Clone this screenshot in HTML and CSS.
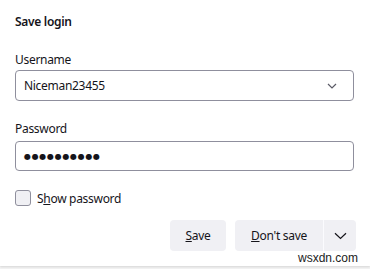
FILE: index.html
```html
<!DOCTYPE html>
<html lang="en">

<head>
    <meta charset="UTF-8">
    <meta name="viewport" content="width=device-width, initial-scale=1.0">
    <title>Save login</title>
    <link rel="stylesheet" href="styles.css">
</head>

<body>
    <div class="panel">
        <h1 class="title">Save login</h1>

        <label class="label label-user">Username</label>
        <div class="field">
            <span class="value">Niceman23455</span>
            <svg class="chevron" width="10" height="6" viewBox="0 0 10 6">
                <path d="M1 1 L5 5 L9 1" fill="none" stroke="#5b5b66" stroke-width="1.2" />
            </svg>
        </div>

        <label class="label label-pass">Password</label>
        <div class="field field-pass">
            <span class="dots">●●●●●●●●●●</span>
        </div>

        <div class="check-row">
            <span class="checkbox"></span>
            <span class="check-text">S<u>h</u>ow password</span>
        </div>

        <div class="buttons">
            <button class="btn btn-save"><u>S</u>ave</button>
            <div class="split">
                <button class="btn btn-dont"><u>D</u>on't save</button>
                <button class="btn btn-more">
                    <svg width="13" height="8" viewBox="0 0 13 8">
                        <path d="M1 1.2 L6.5 6.5 L12 1.2" fill="none" stroke="#15141a" stroke-width="1.2" />
                    </svg>
                </button>
            </div>
        </div>

        <span class="watermark">wsxdn.com</span>
    </div>
</body>

</html>
```

FILE: styles.css
```css
* {
    margin: 0;
    padding: 0;
    box-sizing: border-box;
}

body {
    width: 370px;
    height: 269px;
    background-color: #f3f3f3;
    font-family: "Noto Sans", "Open Sans", sans-serif;
    font-size: 12px;
    letter-spacing: -0.3px;
    color: #15141a;
    overflow: hidden;
}

/* Doorhanger panel */
.panel {
    position: relative;
    height: 266px;
    background-color: #fff;
    padding: 13px 15px 0 15px;
    display: flex;
    flex-direction: column;
    box-shadow: 0 1px 2px rgba(0, 0, 0, 0.12);
}

.title {
    font-size: 12px;
    font-weight: 600;
    line-height: 18px;
    margin-bottom: 20px;
}

.label {
    line-height: 18px;
}

.label-user {
    margin-bottom: 1px;
}

.label-pass {
    margin-bottom: 3px;
}

.field {
    height: 31px;
    width: 339px;
    border: 1px solid #8f8f9d;
    border-radius: 4px;
    display: flex;
    align-items: center;
    justify-content: space-between;
    padding: 0 12px 0 8px;
    margin-bottom: 19px;
}

.field-pass {
    height: 30px;
}

.chevron {
    margin-right: 4px;
}

.dots {
    font-family: "DejaVu Sans", sans-serif;
    font-size: 8px;
    letter-spacing: 0.7px;
}

.check-row {
    display: flex;
    align-items: center;
    gap: 6px;
    height: 16px;
}

.checkbox {
    width: 16px;
    height: 16px;
    border: 1px solid #8f8f9d;
    border-radius: 3px;
    background-color: #f0f0f4;
}

.buttons {
    display: flex;
    justify-content: flex-end;
    gap: 9px;
    margin-top: 14px;
    margin-right: -1px;
}

.split {
    display: flex;
}

.btn {
    height: 31px;
    border: none;
    background-color: #f0f0f4;
    font-family: inherit;
    font-size: inherit;
    letter-spacing: inherit;
    color: #15141a;
    border-radius: 4px;
}

.btn-save {
    width: 56px;
}

.btn-dont {
    width: 88px;
    border-radius: 4px 0 0 4px;
}

.btn-more {
    width: 33px;
    border-radius: 0 4px 4px 0;
    border-left: 1px solid #fbfbfe;
    display: flex;
    align-items: center;
    justify-content: center;
}

.watermark {
    position: absolute;
    right: 12px;
    bottom: 1px;
    font-family: "Liberation Sans", sans-serif;
    font-size: 12px;
    letter-spacing: 0;
    color: #222;
}
```
